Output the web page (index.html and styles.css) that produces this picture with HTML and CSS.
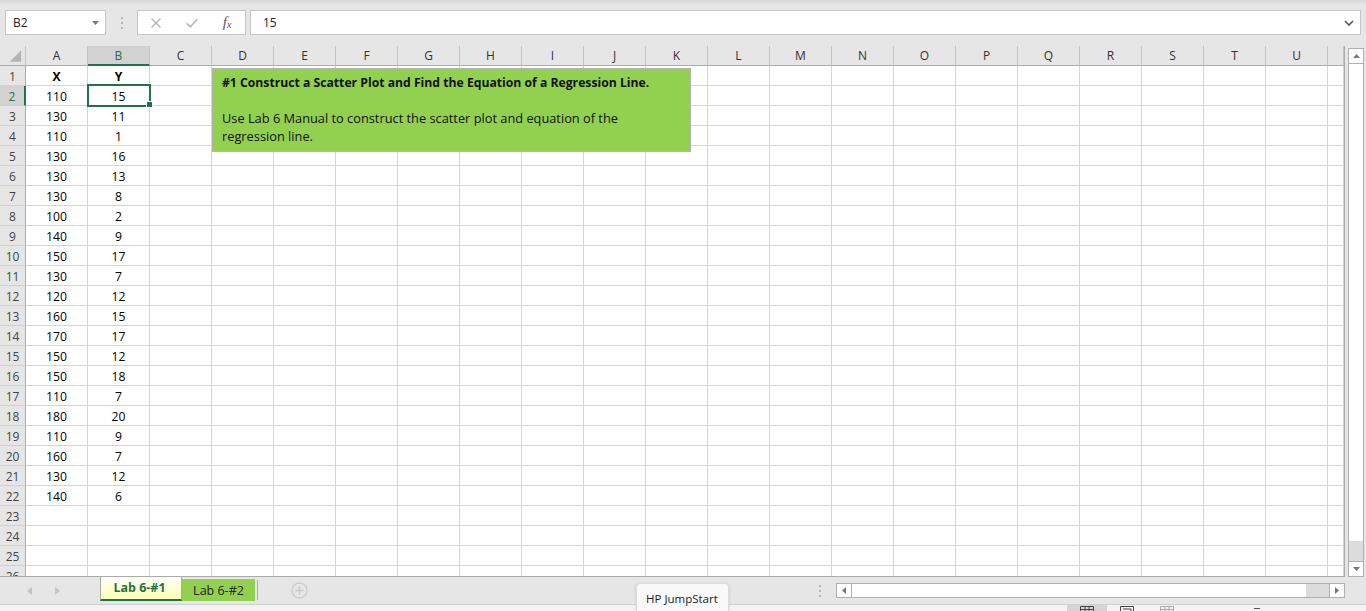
FILE: index.html
```html
<!DOCTYPE html>
<html>
<head>
<meta charset="utf-8">
<title>Lab 6</title>
<link rel="stylesheet" href="styles.css">
</head>
<body>
<div class="fbar">
  <div class="box namebox"><span>B2</span><svg width="7" height="4" viewBox="0 0 7 4"><path d="M0 0h7L3.5 4z" fill="#777"/></svg></div>
  <div class="grip"><svg width="2" height="12" viewBox="0 0 2 12"><rect x="0" y="0" width="2" height="2" fill="#b8b8b8"/><rect x="0" y="5" width="2" height="2" fill="#b8b8b8"/><rect x="0" y="10" width="2" height="2" fill="#b8b8b8"/></svg></div>
  <div class="box fxbox">
    <div class="slot"><svg width="10" height="10" viewBox="0 0 10 10"><path d="M0.5 0.5L9.5 9.5M9.5 0.5L0.5 9.5" stroke="#b4b4b4" stroke-width="1.3" fill="none"/></svg></div>
    <div class="slot"><svg width="12" height="10" viewBox="0 0 12 10"><path d="M0.7 5.2L4.3 8.8L11.3 1.2" stroke="#b4b4b4" stroke-width="1.5" fill="none"/></svg></div>
    <div class="slot"><span class="fx">f<sub>x</sub></span></div>
  </div>
  <div class="box finput"><span>15</span><svg width="10" height="6" viewBox="0 0 10 6"><path d="M1 1L5 5L9 1" stroke="#555" stroke-width="1.6" fill="none"/></svg></div>
</div>

<div class="main">
  <div class="sheet">
    <div class="row hdr"><div class="corner"><svg width="26" height="19" viewBox="0 0 26 19"><path d="M22 4V16H10z" fill="#b4b4b4"/></svg></div><div>A</div><div class="on">B</div><div>C</div><div>D</div><div>E</div><div>F</div><div>G</div><div>H</div><div>I</div><div>J</div><div>K</div><div>L</div><div>M</div><div>N</div><div>O</div><div>P</div><div>Q</div><div>R</div><div>S</div><div>T</div><div>U</div><div></div></div>
    <div class="row"><div class="rh">1</div><div class="bold">X</div><div class="bold">Y</div>
      <div></div><div></div><div></div><div></div><div></div>
      <div></div><div></div><div></div><div></div><div></div>
      <div></div><div></div><div></div><div></div><div></div>
      <div></div><div></div><div></div><div></div><div></div></div>
    <div class="row"><div class="rh on">2</div><div>110</div><div>15</div>
      <div></div><div></div><div></div><div></div><div></div>
      <div></div><div></div><div></div><div></div><div></div>
      <div></div><div></div><div></div><div></div><div></div>
      <div></div><div></div><div></div><div></div><div></div></div>
    <div class="row"><div class="rh">3</div><div>130</div><div>11</div>
      <div></div><div></div><div></div><div></div><div></div>
      <div></div><div></div><div></div><div></div><div></div>
      <div></div><div></div><div></div><div></div><div></div>
      <div></div><div></div><div></div><div></div><div></div></div>
    <div class="row"><div class="rh">4</div><div>110</div><div>1</div>
      <div></div><div></div><div></div><div></div><div></div>
      <div></div><div></div><div></div><div></div><div></div>
      <div></div><div></div><div></div><div></div><div></div>
      <div></div><div></div><div></div><div></div><div></div></div>
    <div class="row"><div class="rh">5</div><div>130</div><div>16</div>
      <div></div><div></div><div></div><div></div><div></div>
      <div></div><div></div><div></div><div></div><div></div>
      <div></div><div></div><div></div><div></div><div></div>
      <div></div><div></div><div></div><div></div><div></div></div>
    <div class="row"><div class="rh">6</div><div>130</div><div>13</div>
      <div></div><div></div><div></div><div></div><div></div>
      <div></div><div></div><div></div><div></div><div></div>
      <div></div><div></div><div></div><div></div><div></div>
      <div></div><div></div><div></div><div></div><div></div></div>
    <div class="row"><div class="rh">7</div><div>130</div><div>8</div>
      <div></div><div></div><div></div><div></div><div></div>
      <div></div><div></div><div></div><div></div><div></div>
      <div></div><div></div><div></div><div></div><div></div>
      <div></div><div></div><div></div><div></div><div></div></div>
    <div class="row"><div class="rh">8</div><div>100</div><div>2</div>
      <div></div><div></div><div></div><div></div><div></div>
      <div></div><div></div><div></div><div></div><div></div>
      <div></div><div></div><div></div><div></div><div></div>
      <div></div><div></div><div></div><div></div><div></div></div>
    <div class="row"><div class="rh">9</div><div>140</div><div>9</div>
      <div></div><div></div><div></div><div></div><div></div>
      <div></div><div></div><div></div><div></div><div></div>
      <div></div><div></div><div></div><div></div><div></div>
      <div></div><div></div><div></div><div></div><div></div></div>
    <div class="row"><div class="rh">10</div><div>150</div><div>17</div>
      <div></div><div></div><div></div><div></div><div></div>
      <div></div><div></div><div></div><div></div><div></div>
      <div></div><div></div><div></div><div></div><div></div>
      <div></div><div></div><div></div><div></div><div></div></div>
    <div class="row"><div class="rh">11</div><div>130</div><div>7</div>
      <div></div><div></div><div></div><div></div><div></div>
      <div></div><div></div><div></div><div></div><div></div>
      <div></div><div></div><div></div><div></div><div></div>
      <div></div><div></div><div></div><div></div><div></div></div>
    <div class="row"><div class="rh">12</div><div>120</div><div>12</div>
      <div></div><div></div><div></div><div></div><div></div>
      <div></div><div></div><div></div><div></div><div></div>
      <div></div><div></div><div></div><div></div><div></div>
      <div></div><div></div><div></div><div></div><div></div></div>
    <div class="row"><div class="rh">13</div><div>160</div><div>15</div>
      <div></div><div></div><div></div><div></div><div></div>
      <div></div><div></div><div></div><div></div><div></div>
      <div></div><div></div><div></div><div></div><div></div>
      <div></div><div></div><div></div><div></div><div></div></div>
    <div class="row"><div class="rh">14</div><div>170</div><div>17</div>
      <div></div><div></div><div></div><div></div><div></div>
      <div></div><div></div><div></div><div></div><div></div>
      <div></div><div></div><div></div><div></div><div></div>
      <div></div><div></div><div></div><div></div><div></div></div>
    <div class="row"><div class="rh">15</div><div>150</div><div>12</div>
      <div></div><div></div><div></div><div></div><div></div>
      <div></div><div></div><div></div><div></div><div></div>
      <div></div><div></div><div></div><div></div><div></div>
      <div></div><div></div><div></div><div></div><div></div></div>
    <div class="row"><div class="rh">16</div><div>150</div><div>18</div>
      <div></div><div></div><div></div><div></div><div></div>
      <div></div><div></div><div></div><div></div><div></div>
      <div></div><div></div><div></div><div></div><div></div>
      <div></div><div></div><div></div><div></div><div></div></div>
    <div class="row"><div class="rh">17</div><div>110</div><div>7</div>
      <div></div><div></div><div></div><div></div><div></div>
      <div></div><div></div><div></div><div></div><div></div>
      <div></div><div></div><div></div><div></div><div></div>
      <div></div><div></div><div></div><div></div><div></div></div>
    <div class="row"><div class="rh">18</div><div>180</div><div>20</div>
      <div></div><div></div><div></div><div></div><div></div>
      <div></div><div></div><div></div><div></div><div></div>
      <div></div><div></div><div></div><div></div><div></div>
      <div></div><div></div><div></div><div></div><div></div></div>
    <div class="row"><div class="rh">19</div><div>110</div><div>9</div>
      <div></div><div></div><div></div><div></div><div></div>
      <div></div><div></div><div></div><div></div><div></div>
      <div></div><div></div><div></div><div></div><div></div>
      <div></div><div></div><div></div><div></div><div></div></div>
    <div class="row"><div class="rh">20</div><div>160</div><div>7</div>
      <div></div><div></div><div></div><div></div><div></div>
      <div></div><div></div><div></div><div></div><div></div>
      <div></div><div></div><div></div><div></div><div></div>
      <div></div><div></div><div></div><div></div><div></div></div>
    <div class="row"><div class="rh">21</div><div>130</div><div>12</div>
      <div></div><div></div><div></div><div></div><div></div>
      <div></div><div></div><div></div><div></div><div></div>
      <div></div><div></div><div></div><div></div><div></div>
      <div></div><div></div><div></div><div></div><div></div></div>
    <div class="row"><div class="rh">22</div><div>140</div><div>6</div>
      <div></div><div></div><div></div><div></div><div></div>
      <div></div><div></div><div></div><div></div><div></div>
      <div></div><div></div><div></div><div></div><div></div>
      <div></div><div></div><div></div><div></div><div></div></div>
    <div class="row"><div class="rh">23</div><div></div><div></div>
      <div></div><div></div><div></div><div></div><div></div>
      <div></div><div></div><div></div><div></div><div></div>
      <div></div><div></div><div></div><div></div><div></div>
      <div></div><div></div><div></div><div></div><div></div></div>
    <div class="row"><div class="rh">24</div><div></div><div></div>
      <div></div><div></div><div></div><div></div><div></div>
      <div></div><div></div><div></div><div></div><div></div>
      <div></div><div></div><div></div><div></div><div></div>
      <div></div><div></div><div></div><div></div><div></div></div>
    <div class="row"><div class="rh">25</div><div></div><div></div>
      <div></div><div></div><div></div><div></div><div></div>
      <div></div><div></div><div></div><div></div><div></div>
      <div></div><div></div><div></div><div></div><div></div>
      <div></div><div></div><div></div><div></div><div></div></div>
    <div class="row"><div class="rh">26</div><div></div><div></div>
      <div></div><div></div><div></div><div></div><div></div>
      <div></div><div></div><div></div><div></div><div></div>
      <div></div><div></div><div></div><div></div><div></div>
      <div></div><div></div><div></div><div></div><div></div></div>

    <div class="note">
      <p class="title">#1 Construct a Scatter Plot and Find the Equation of a Regression Line.</p>
      <p class="blank">&nbsp;</p>
      <p class="body">Use Lab 6 Manual to construct the scatter plot and equation of the<br>regression line.</p>
    </div>
    <div class="sel"></div>
    <div class="handle"></div>
  </div>
  <div class="vscroll">
    <div class="vs">
      <div class="vbtn up"><svg width="7" height="4" viewBox="0 0 7 4"><path d="M0 4h7L3.5 0z" fill="#777"/></svg></div>
      <div class="thumb"></div>
      <div class="track"></div>
      <div class="vbtn dn"><svg width="7" height="4" viewBox="0 0 7 4"><path d="M0 0h7L3.5 4z" fill="#777"/></svg></div>
    </div>
  </div>
</div>

<div class="tabbar">
  <div class="nav">
    <svg width="5" height="8" viewBox="0 0 5 8"><path d="M5 0V8L0 4z" fill="#c4c4c4"/></svg>
    <svg width="5" height="8" viewBox="0 0 5 8"><path d="M0 0V8L5 4z" fill="#c4c4c4"/></svg>
  </div>
  <div class="tab tab1">Lab 6-#1</div>
  <div class="tab tab2">Lab 6-#2</div>
  <div class="sep"></div>
  <div class="add"><svg width="17" height="17" viewBox="0 0 17 17"><circle cx="8.5" cy="8.5" r="7.5" fill="none" stroke="#c8c8c8" stroke-width="1.2"/><path d="M8.5 4.5V12.5M4.5 8.5H12.5" stroke="#c8c8c8" stroke-width="1.4"/></svg></div>
  <div class="hwrap">
    <div class="hgrip"><svg width="2" height="12" viewBox="0 0 2 12"><rect x="0" y="0" width="2" height="2" fill="#b8b8b8"/><rect x="0" y="5" width="2" height="2" fill="#b8b8b8"/><rect x="0" y="10" width="2" height="2" fill="#b8b8b8"/></svg></div>
    <div class="hs">
      <div class="hbtn lft"><svg width="4" height="7" viewBox="0 0 4 7"><path d="M4 0V7L0 3.5z" fill="#777"/></svg></div>
      <div class="hthumb"></div>
      <div class="htrack"></div>
      <div class="hbtn rgt"><svg width="4" height="7" viewBox="0 0 4 7"><path d="M0 0V7L4 3.5z" fill="#777"/></svg></div>
    </div>
  </div>
</div>

<div class="status">
  <div class="vb on"><svg width="14" height="8" viewBox="0 0 14 8"><path d="M0.5 8V0.5H13.5V8M5 0.5V8M9 0.5V8M0.5 3.5H13.5" stroke="#444" fill="none"/></svg></div>
  <div class="vb"><svg width="14" height="8" viewBox="0 0 14 8"><path d="M0.5 8V0.5H13.5V8M3 3H11V8" stroke="#444" fill="none"/></svg></div>
  <div class="vb"><svg width="14" height="8" viewBox="0 0 14 8"><path d="M0.5 8V0.5H13.5V8M5 0.5V8M9 0.5V8M0.5 3.5H13.5" stroke="#aaa" fill="none"/></svg></div>
  <div class="minus"></div>
</div>

<div class="tooltip">HP JumpStart</div>
</body>
</html>
```

FILE: styles.css
```css
* { box-sizing: border-box; margin: 0; padding: 0; }
html, body { width: 1366px; height: 611px; overflow: hidden; }
body {
  background: #e6e6e6;
  font-family: "Open Sans", "Noto Sans", sans-serif;
  color: #222;
  position: relative;
}

/* formula bar */
.fbar {
  height: 46px;
  display: flex;
  align-items: flex-start;
  padding: 10px 0 0 5px;
  background: linear-gradient(#d8d8d8, #e6e6e6 5px);
}
.box {
  height: 25px;
  background: #fff;
  border: 1px solid #c6c6c6;
  display: flex;
  align-items: center;
}
.namebox {
  width: 101px;
  justify-content: space-between;
  padding: 0 6px 0 7px;
  font-size: 12px;
  color: #222;
}
.grip {
  width: 31px;
  height: 25px;
  display: flex;
  align-items: center;
  justify-content: center;
}
.fxbox { width: 109px; }
.fxbox .slot {
  width: 36px;
  height: 100%;
  display: flex;
  align-items: center;
  justify-content: center;
}
.fx {
  font-family: "Liberation Serif", serif;
  font-style: italic;
  font-size: 15px;
  color: #555;
  line-height: 1;
}
.fx sub { font-size: 10px; vertical-align: -1px; }
.finput {
  width: 1111px;
  margin-left: 4px;
  justify-content: space-between;
  padding: 0 6px 0 12px;
  font-size: 12px;
  color: #222;
}

/* sheet */
.main { display: flex; height: 531px; }
.sheet {
  width: 1345px;
  height: 531px;
  overflow: hidden;
  position: relative;
  background: #fff;
  border-right: 1px solid #ababab;
  border-bottom: 1px solid #ababab;
}
.row {
  display: grid;
  grid-template-columns: 26px repeat(21, 62px) 16px;
  height: 20px;
}
.row > div {
  border-right: 1px solid #d4d4d4;
  border-bottom: 1px solid #d4d4d4;
  font-size: 12.2px;
  line-height: 21px;
  text-align: center;
  color: #000;
  white-space: nowrap;
  overflow: hidden;
}
.row > .rh {
  background: #e6e6e6;
  border-right-color: #ababab;
  border-bottom-color: #d0d0d0;
  color: #444;
  font-size: 12px;
}
.hdr > div {
  background: #e6e6e6;
  border-right-color: #c4c4c4;
  border-bottom-color: #ababab;
  color: #333;
  font-size: 12px;
  line-height: 20px;
}
.hdr > .on {
  background: #d2d2d2;
  border-bottom: 2px solid #217346;
  color: #217346;
}
.rh.on {
  background: #d2d2d2;
  border-right: 2px solid #217346;
  color: #217346;
}
.corner { display: flex; }
.bold { font-weight: 700; }

.note {
  position: absolute;
  left: 212px;
  top: 22px;
  width: 479px;
  height: 84px;
  background: #92d050;
  border: 1px solid #b3b3b3;
  padding: 5px 9px;
  font-size: 12.8px;
  line-height: 18px;
  color: #111;
}
.note .title { font-weight: 700; font-size: 12.2px; }
.note .body { margin-top: -1px; }

.sel {
  position: absolute;
  left: 87px;
  top: 38px;
  width: 64px;
  height: 23px;
  border: 2px solid #217346;
}
.handle {
  position: absolute;
  left: 146px;
  top: 55px;
  width: 7px;
  height: 7px;
  background: #217346;
  border: 1px solid #fff;
}

/* vertical scrollbar */
.vscroll { width: 21px; padding: 2px 0 0 3px; }
.vs {
  width: 16px;
  height: 529px;
  border: 1px solid #b0b0b0;
  background: #dcdcdc;
  display: flex;
  flex-direction: column;
}
.vbtn {
  height: 15px;
  flex: none;
  background: #fff;
  display: flex;
  align-items: center;
  justify-content: center;
}
.vbtn.up { border-bottom: 1px solid #b0b0b0; }
.vbtn.dn { border-top: 1px solid #b0b0b0; }
.vs .thumb { flex: 1; background: #fff; }
.vs .track { height: 20px; flex: none; }

/* tabs */
.tabbar {
  height: 27px;
  display: flex;
  align-items: flex-start;
}
.nav {
  width: 100px;
  height: 27px;
  display: flex;
  align-items: center;
  padding-left: 27px;
  gap: 23px;
}
.tab {
  display: flex;
  align-items: center;
  justify-content: center;
  font-size: 12px;
}
.tab1 {
  width: 82px;
  height: 25px;
  margin-top: -1px;
  background: linear-gradient(#ffffff, #ffffb4);
  border-left: 1px solid #ababab;
  border-right: 1px solid #ababab;
  border-bottom: 2px solid #217346;
  color: #217346;
  font-weight: 700;
  font-size: 12.5px;
  padding-right: 3px;
}
.tab2 {
  width: 73px;
  height: 22px;
  margin-top: 2px;
  background: #92d050;
  color: #222;
  font-size: 12.5px;
}
.sep {
  width: 1px;
  height: 20px;
  margin: 3px 0 0 2px;
  background: #ababab;
}
.add { margin: 5px 0 0 33px; display: flex; }
.hwrap {
  margin-left: auto;
  margin-right: 21px;
  display: flex;
  align-items: center;
  padding-top: 6px;
}
.hgrip {
  width: 16px;
  margin-right: 8px;
  display: flex;
  justify-content: center;
}
.hs {
  width: 509px;
  height: 15px;
  border: 1px solid #b0b0b0;
  background: #dcdcdc;
  display: flex;
}
.hbtn {
  width: 15px;
  flex: none;
  background: #fff;
  display: flex;
  align-items: center;
  justify-content: center;
}
.hbtn.lft { border-right: 1px solid #b0b0b0; }
.hbtn.rgt { border-left: 1px solid #b0b0b0; }
.hthumb { flex: 1; background: #fff; }
.htrack { width: 23px; flex: none; }

/* status bar */
.status {
  height: 7px;
  background: #f3f3f3;
  border-top: 1px solid #d0d0d0;
  display: flex;
  padding-left: 1067px;
}
.vb {
  width: 40px;
  height: 6px;
  display: flex;
  justify-content: center;
  align-items: flex-start;
  padding-top: 1px;
  overflow: hidden;
}
.vb.on { background: #d4d4d4; }
.minus {
  width: 6px;
  height: 1px;
  background: #555;
  margin: 3px 0 0 67px;
}

.tooltip {
  position: absolute;
  left: 636px;
  top: 583px;
  width: 93px;
  height: 40px;
  background: #f9f9f9;
  border: 1px solid #dcdcdc;
  border-radius: 4px;
  box-shadow: 0 1px 3px rgba(0,0,0,0.15);
  padding: 0 0 0 9px;
  font-size: 11.5px;
  line-height: 30px;
  color: #222;
}
```
